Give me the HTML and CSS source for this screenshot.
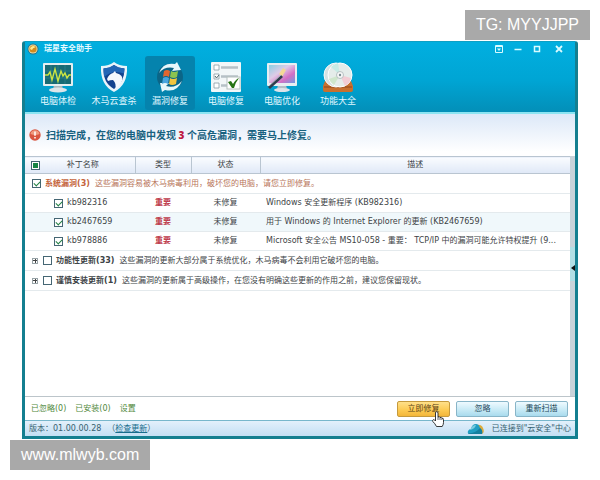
FILE: index.html
```html
<!DOCTYPE html>
<html lang="zh-CN">
	<head>
		<meta charset="utf-8" />
		<title>瑞星安全助手</title>
		<link rel="stylesheet" href="styles.css" />
	</head>
	<body>
		<div class="mark mark-top">TG: MYYJJPP</div>
		<div class="window">
			<header class="header">
				<div class="titlebar">
					<svg class="logo" viewBox="0 0 12 12">
						<circle cx="6" cy="6" r="5.5" fill="#23748c" />
						<circle cx="6" cy="6" r="4.6" fill="#e9d9a0" />
						<circle cx="6" cy="6" r="3.6" fill="#d18b1c" />
						<path d="M3 6a3 3 0 0 1 5.500-1.500Q6 4 5 7z" fill="#ffe98e" />
					</svg>
					<h1>瑞星安全助手</h1>
					<div class="controls">
						<button type="button" aria-label="菜单">
							<svg viewBox="0 0 8 8"><path d="M.5.5h7v7h-7zM.5 1.500h7" /><path class="solid" d="M2 3.500h4L4 6z" /></svg>
						</button>
						<button type="button" aria-label="最小化">
							<svg viewBox="0 0 8 8"><path d="M.5 4.500h7" stroke-width="1.500" /></svg>
						</button>
						<button type="button" aria-label="最大化">
							<svg viewBox="0 0 8 8"><path d="M1.500 1.500h5v5h-5z" stroke-width="1.500" /></svg>
						</button>
						<button type="button" aria-label="关闭" class="close">
							<svg viewBox="0 0 8 8"><path d="M1 1l6 6M7 1l-6 6" stroke-width="1.800" /></svg>
						</button>
					</div>
				</div>
				<nav class="tabs">
					<a href="#">
						<svg viewBox="0 0 32 32">
							<path d="M12 24h8l1 4h-10z" fill="#aab8bf" />
							<ellipse cx="16" cy="29" rx="9" ry="2.500" fill="#dce5e9" />
							<rect x="1" y="2" width="30" height="23" rx="1" fill="#e4eef0" />
							<rect x="3" y="4" width="26" height="19" fill="#176a74" />
							<path d="M3 10h26M3 17h26M9 4v19M16 4v19M23 4v19" stroke="#338790" stroke-width=".6" />
							<path d="M3 14h3l2-3 2 8 3-11 3 12 3-10 2 5 2-3 2 5 2-3h2" fill="none" stroke="#cce443" stroke-width="1.400" />
						</svg>
						<span>电脑体检</span>
					</a>
					<a href="#">
						<svg viewBox="0 0 32 32">
							<path d="M16 1q5 4 13 4 1 19-13 26Q2 24 3 5q8 0 13-4z" fill="#e9f4fa" />
							<path d="M16 4q4 3 10.500 3.500 0 14.500-10.500 20.500Q5 22 5.500 7.500 12 7 16 4z" fill="#12428e" />
							<path d="M16 4q4 3 10.500 3.500l-.5 5Q15 8 6 16l-.5-8.500Q12 7 16 4z" fill="#2366b5" />
							<path d="M9 18q2-5 6-6l2-2 1 2q8 2 6 8-2 5-7 8 2-5-2-9-3 0-5 1z" fill="#f4f8fd" />
						</svg>
						<span>木马云查杀</span>
					</a>
					<a href="#" class="active">
						<svg viewBox="0 0 32 32">
							<circle cx="16" cy="16" r="13" fill="#0b6587" />
							<path d="M5 12Q9 1 21 3l2-2 4 8-9 1 2-3Q11 5 5 12z" fill="#e6f7fb" />
							<path d="M28 20Q23 32 11 29l-3 2-2-9 9 0-3 3q9 3 16-5z" fill="#e6f7fb" />
							<path d="M10 10q3-2 6 0l-1 6q-3-2-6 0z" fill="#e2662e" />
							<path d="M17 10q3 2 7 0l-1 6q-3 2-7 0z" fill="#8bc34f" />
							<path d="M9 17q3-2 6 0l-1 6q-3-2-6 0z" fill="#47a5df" />
							<path d="M16 17q3 2 7 0l-1 6q-4 2-7 0z" fill="#f2c43e" />
						</svg>
						<span>漏洞修复</span>
					</a>
					<a href="#">
						<svg viewBox="0 0 32 32">
							<rect x="1" y="1" width="30" height="30" rx="1" fill="#f2f7f8" />
							<path d="M4 4h5v5H4zM4 13h5v5H4zM4 22h5v5H4z" fill="#fff" stroke="#899da5" stroke-width=".8" />
							<path d="M11 6.500h17M11 15.500h17M11 24.500h6" stroke="#b6c1c6" stroke-width="2.500" />
							<path d="M5 15l1.500 2L9 14" fill="none" stroke="#4d656a" />
							<rect x="17" y="16" width="13" height="12" fill="#fff" stroke="#b5c2bf" />
							<path d="M18 21l3-1 2 3q3-5 6-6-4 5-5 10h-2z" fill="#267415" />
						</svg>
						<span>电脑修复</span>
					</a>
					<a href="#">
						<svg viewBox="0 0 32 32">
							<defs>
								<linearGradient id="screen" x2="1" y2="1">
									<stop offset="0" stop-color="#8bd0e3" />
									<stop offset=".4" stop-color="#dfcbe7" />
									<stop offset=".7" stop-color="#d36fc4" />
									<stop offset="1" stop-color="#6d9be1" />
								</linearGradient>
							</defs>
							<path d="M12 24h8l1 4h-10z" fill="#b4bec7" />
							<ellipse cx="16" cy="29" rx="8" ry="2" fill="#dce3e9" />
							<rect x="1" y="2" width="30" height="23" rx="1" fill="#e6eef2" />
							<rect x="3" y="4" width="26" height="18" fill="url(#screen)" />
							<path d="M13 13l4-6 3 2-4 7z" fill="#f4d896" />
							<path d="M2 26l13-12 2 2L4 28z" fill="#303d4c" />
							<path d="M3 25l12-11" stroke="#a6b2bb" />
						</svg>
						<span>电脑优化</span>
					</a>
					<a href="#">
						<svg viewBox="0 0 32 32">
							<path d="M3 20h26l2 5v4q0 2-2 2H3q-2 0-2-2v-4z" fill="#c7702f" />
							<path d="M2 26h28" stroke="#8f451c" />
							<circle cx="14" cy="14" r="12" fill="#d8e2e3" stroke="#f7fafa" />
							<circle cx="18" cy="14" r="12" fill="#e5ecea" stroke="#fff" />
							<path d="M18 14L9 6a12 12 0 0 1 7-4z" fill="#c7ebe5" />
							<path d="M18 14l11 3a12 12 0 0 1-6 8z" fill="#f2ccd4" />
							<path d="M18 14L7 18a12 12 0 0 0 5 6z" fill="#cfe6cc" />
							<circle cx="18" cy="14" r="3.500" fill="#f7f7f7" stroke="#a9b4b6" stroke-width=".8" />
							<circle cx="18" cy="14" r="1.200" fill="#7d9095" />
						</svg>
						<span>功能大全</span>
					</a>
				</nav>
			</header>

			<main class="content">
				<div class="notice">
					<svg class="alert" viewBox="0 0 12 12">
						<circle cx="6" cy="6" r="5.700" fill="#d9553f" />
						<path d="M1.500 5a4.600 4.600 0 0 1 9 0q-4 2-9 0z" fill="#f09a7f" />
						<path d="M6 2.500v4.300M6 8v1.500" stroke="#fff" stroke-width="1.500" />
					</svg>
					<p>扫描完成，在您的电脑中发现 <b>3</b> 个高危漏洞，需要马上修复。</p>
				</div>

				<div class="list">
					<div class="rows">
						<table>
							<colgroup>
								<col class="col-name" />
								<col class="col-type" />
								<col class="col-state" />
								<col />
							</colgroup>
							<thead>
								<tr>
									<th>
										<div class="name-head">
											<input type="checkbox" class="partial" aria-label="全选" />
											<span>补丁名称</span>
										</div>
									</th>
									<th>类型</th>
									<th>状态</th>
									<th>描述</th>
								</tr>
							</thead>
							<tbody>
								<tr class="group danger">
									<td colspan="4">
										<label><input type="checkbox" checked /><b>系统漏洞(3)</b><span>这些漏洞容易被木马病毒利用，破坏您的电脑，请您立即修复。</span></label>
									</td>
								</tr>
								<tr>
									<td><label class="patch"><input type="checkbox" checked />kb982316</label></td>
									<td class="type">重要</td>
									<td class="state">未修复</td>
									<td class="desc">Windows 安全更新程序 (KB982316)</td>
								</tr>
								<tr class="odd">
									<td><label class="patch"><input type="checkbox" checked />kb2467659</label></td>
									<td class="type">重要</td>
									<td class="state">未修复</td>
									<td class="desc">用于 Windows 的 Internet Explorer 的更新 (KB2467659)</td>
								</tr>
								<tr>
									<td><label class="patch"><input type="checkbox" checked />kb978886</label></td>
									<td class="type">重要</td>
									<td class="state">未修复</td>
									<td class="desc">Microsoft 安全公告 MS10-058 - 重要： TCP/IP 中的漏洞可能允许特权提升 (9...</td>
								</tr>
								<tr class="group">
									<td colspan="4">
										<div class="fold">
											<button type="button" class="expand" aria-label="展开"></button>
											<label><input type="checkbox" /><b>功能性更新(33)</b><span>这些漏洞的更新大部分属于系统优化，木马病毒不会利用它破坏您的电脑。</span></label>
										</div>
									</td>
								</tr>
								<tr class="group">
									<td colspan="4">
										<div class="fold">
											<button type="button" class="expand" aria-label="展开"></button>
											<label><input type="checkbox" /><b>谨慎安装更新(1)</b><span>这些漏洞的更新属于高级操作，在您没有明确这些更新的作用之前，建议您保留现状。</span></label>
										</div>
									</td>
								</tr>
							</tbody>
						</table>
					</div>
					<div class="side"><button type="button" aria-label="展开侧栏"></button></div>
				</div>

				<div class="actions">
					<a href="#">已忽略(0)</a>
					<a href="#">已安装(0)</a>
					<a href="#">设置</a>
					<div class="buttons">
						<button type="button" class="btn primary">
							立即修复
							<svg class="cursor" viewBox="0 0 12 16">
								<path d="M3.500 9V2q0-1.400 1.200-1.400T6 2v4q1.500-.8 2 .5 1.500-.6 1.900.7 1.600-.3 1.600 1.300v3q0 2-1.300 4H4.500Q3 12.500.8 10.500.2 9 1.600 8.600q1 0 1.900 1.400z" fill="#fff" stroke="#222" stroke-width=".9" />
								<path d="M6 6v3M8 6.500V9M9.900 7.200V9" stroke="#222" stroke-width=".7" />
							</svg>
						</button>
						<button type="button" class="btn">忽略</button>
						<button type="button" class="btn">重新扫描</button>
					</div>
				</div>
			</main>

			<footer class="status">
				<span>版本：01.00.00.28</span>
				<span class="update">（<a href="#">检查更新</a>）</span>
				<svg class="cloud" viewBox="0 0 18 12">
					<path d="M10 2q4-1 6 3 2 4-1 6H9z" fill="#dcab3a" />
					<path d="M1 8q1-2 3-2 1-5 5-5 3 0 4 4 3 2 2 6H3Q0 11 1 8z" fill="#209ec3" />
					<path d="M3 7q2-5 6-5-1 4-6 5z" fill="#78cce0" />
					<path d="M1 10q7 1 12-5 3 2 2 6H3q-2 0-2-1z" fill="#147f9f" />
				</svg>
				<span>已连接到"云安全"中心</span>
			</footer>
		</div>
		<div class="mark mark-bottom">www.mlwyb.com</div>
	</body>
</html>
```

FILE: styles.css
```css
* {
	box-sizing: border-box;
}
body {
	margin: 0;
	padding: 41px 22px;
	height: 100vh;
	min-height: 400px;
	display: flex;
	background: #fff;
	font-family: "DejaVu Sans", "Noto Sans CJK SC", sans-serif;
	font-size: 8px;
	line-height: 12px;
	color: #3d4346;
}
button,
input {
	margin: 0;
	padding: 0;
	font: inherit;
	color: inherit;
}
svg {
	display: block;
}

.window {
	flex: 1;
	min-width: 0;
	display: flex;
	flex-direction: column;
	border: 1px solid #128296;
	border-width: 1px 3px 3px;
	border-color: #0da0c4 #147f90 #147f90;
	border-radius: 3px 3px 0 0;
	background: #00a9d8;
}

/* header */
.header {
	padding: 0 8px;
	background: linear-gradient(#01afe0, #00a5d4 55%, #038fb8);
}
.titlebar {
	height: 14px;
	display: flex;
	align-items: center;
	gap: 5px;
	color: #e6faff;
}
.logo {
	width: 12px;
	height: 12px;
	margin-left: -6px;
}
.titlebar h1 {
	margin: 0 auto 0 0;
	font-size: 8px;
	line-height: 12px;
}
.controls {
	display: flex;
	gap: 11px;
	margin-right: 4px;
}
.controls button {
	width: 8px;
	height: 8px;
	border: 0;
	background: none;
}
.controls .close {
	margin-left: 3px;
}
.controls path {
	fill: none;
	stroke: #d8fbff;
}
.controls .solid {
	fill: #d8fbff;
	stroke: none;
}
.tabs {
	display: flex;
	gap: 6px;
	padding-bottom: 2px;
}
.tabs a {
	width: 50px;
	height: 54px;
	padding-top: 5px;
	display: flex;
	flex-direction: column;
	align-items: center;
	gap: 2px;
	border-radius: 3px;
	font-size: 9px;
	line-height: 12px;
	white-space: nowrap;
	text-decoration: none;
	color: #e0f8ff;
}
.tabs svg {
	width: 32px;
	height: 32px;
}
.tabs .active {
	background: #0583ad;
}

/* content */
.content {
	flex: 1;
	display: flex;
	flex-direction: column;
	background: #fff;
}
.notice {
	height: 44px;
	padding-left: 4px;
	display: flex;
	align-items: center;
	gap: 5px;
	border-top: 2px solid #8be4f2;
	background: linear-gradient(#dce8f8, #fff 90%);
	color: #17617f;
}
.alert {
	width: 12px;
	height: 12px;
}
.notice p {
	margin: 0;
	font-family: "Noto Sans", "Noto Sans CJK SC", sans-serif;
	font-size: 10px;
	font-weight: bold;
}
.notice b {
	color: #bd1741;
}
.list {
	flex: 1;
	display: flex;
	align-items: stretch;
	border-bottom: 1px solid #bcc5ca;
}
.rows {
	flex: 1;
	min-width: 0;
}
table {
	width: 100%;
	table-layout: fixed;
	border-collapse: collapse;
}
.col-name {
	width: 110px;
}
.col-type {
	width: 56px;
}
.col-state {
	width: 69px;
}
th,
td {
	height: 19px;
	padding: 0;
	border-bottom: 1px solid #e4eaed;
	text-align: center;
	white-space: nowrap;
}
th {
	height: 17px;
	border: 1px solid #b9c5d1;
	border-width: 1px 1px 1px 0;
	background: linear-gradient(#fafcff, #dfe8f7);
	font-weight: normal;
}
th:last-child {
	border-right: 0;
}
.name-head {
	display: grid;
	grid-template-columns: 16px 1fr 16px;
	align-items: center;
	padding-left: 6px;
}
.group td {
	height: 20px;
	padding-left: 7px;
	text-align: left;
}
label {
	display: flex;
	align-items: center;
}
.group input {
	margin-right: 4px;
}
.group b {
	margin-right: 5px;
}
.danger {
	color: #b8755a;
}
.danger b {
	color: #c4643c;
}
.odd {
	background: #f0f8fb;
}
.patch {
	padding-left: 29px;
	gap: 4px;
}
.type {
	font-weight: bold;
	color: #bd3849;
}
td.desc {
	padding-left: 6px;
	text-align: left;
}
.fold {
	display: flex;
	align-items: center;
	gap: 5px;
}
input[type="checkbox"] {
	appearance: none;
	flex: none;
	width: 9px;
	height: 9px;
	display: grid;
	place-items: center;
	border: 1px solid #456673;
	background: #fff;
}
input[type="checkbox"]:checked::after {
	content: "";
	width: 5px;
	height: 3px;
	margin-top: -1px;
	border: solid #218044;
	border-width: 0 0 1px 1px;
	transform: rotate(-45deg);
}
input.partial::after {
	content: "";
	width: 5px;
	height: 5px;
	background: #168443;
}
.expand {
	width: 6px;
	height: 6px;
	border: 1px solid #98a3a7;
	background: linear-gradient(#444, #444) center / 4px 1px no-repeat, linear-gradient(#444, #444) center / 1px 4px no-repeat, #fff;
}
.side {
	width: 5px;
	padding-bottom: 16px;
	display: flex;
	align-items: center;
	background: linear-gradient(#c9d3da 38%, #b1dfe5 38%, #b1dfe5 52%, #c9d3da 52%);
}
.side button {
	width: 5px;
	height: 46px;
	border: 0;
	background: none;
}
.side button::before {
	content: "";
	display: block;
	border: 3px solid transparent;
	border-right: 4px solid #111;
	border-left: 0;
}

/* bottom bars */
.actions {
	height: 23px;
	padding: 0 7px 0 6px;
	display: flex;
	align-items: center;
	gap: 9px;
}
.actions a {
	text-decoration: none;
	color: #50883c;
}
.buttons {
	margin-left: auto;
	display: flex;
	gap: 6px;
}
.btn {
	position: relative;
	width: 53px;
	height: 16px;
	border: 1px solid #88b5c8;
	border-radius: 2px;
	background: linear-gradient(#effaff, #c5e9f5 60%, #a9dbed);
	color: #24495a;
}
.primary {
	border-color: #c59a3d;
	background: linear-gradient(#ffe08a, #fcc950 60%, #f3b63a);
	color: #5b4318;
}
.cursor {
	position: absolute;
	left: 34px;
	top: 9px;
	width: 12px;
	height: 16px;
	z-index: 1;
}
.status {
	height: 16px;
	padding: 0 4px;
	display: flex;
	align-items: center;
	border-top: 1px solid #78b7cc;
	background: linear-gradient(#e3f0fb, #c3dff4);
	color: #36606f;
}
.update {
	margin: 0 auto 0 6px;
}
.update a {
	color: #176c8c;
}
.cloud {
	width: 18px;
	height: 12px;
	margin-right: 7px;
}

/* site marks lying over the page */
.mark {
	position: absolute;
	z-index: 2;
	padding: 0 11px;
	background: #a9a9a9;
	font: 16px/30px "Liberation Sans", sans-serif;
	color: #fff;
}
.mark-top {
	top: 10px;
	right: 10px;
}
.mark-bottom {
	left: 10px;
	bottom: 10px;
}
```
